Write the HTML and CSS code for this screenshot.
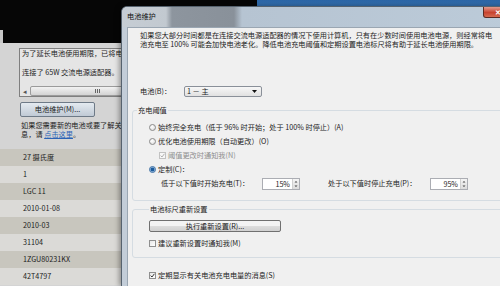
FILE: index.html
```html
<!DOCTYPE html>
<html lang="zh-CN">
<head>
    <meta charset="UTF-8">
    <meta name="viewport" content="width=device-width, initial-scale=1.0">
    <title>电池维护</title>
    <link rel="stylesheet" href="styles.css">
</head>
<body>
    <div class="desktop">
        <div class="topbar">
            <span class="tab"></span>
            <span class="glass"></span>
        </div>

        <div class="panel">
            <div class="notice">
                <p>为了延长电池使用期限，已将电池充电阈值设为</p>
                <p class="second">连接了 65W 交流电源适配器。</p>
                <div class="hscroll">
                    <span class="arrow">◂</span>
                    <span class="thumb"><span class="grip"></span></span>
                </div>
            </div>
            <button class="btn-main">电池维护(M)...</button>
            <p class="hint">如果您需要新的电池或要了解关于电池的更多信<br>息，请 <a href="#">点击这里</a>。</p>
        </div>

        <ul class="info">
            <li>27 摄氏度</li>
            <li>1</li>
            <li>LGC 11</li>
            <li>2010-01-08</li>
            <li>2010-03</li>
            <li>31104</li>
            <li>1ZGU80231KX</li>
            <li>42T4797</li>
        </ul>
    </div>

    <div class="dialog">
        <div class="titlebar">
            <span class="title">电池维护</span>
            <span class="close">✕</span>
        </div>

        <div class="client">
            <p class="intro">如果您大部分时间都是在连接交流电源适配器的情况下使用计算机，只有在少数时间使用电池电源，则经常将电<br>池充电至 100% 可能会加快电池老化。降低电池充电阈值和定期设置电池标尺将有助于延长电池使用期限。</p>

            <div class="battery-row">
                <span class="battery-label">电池(B)：</span>
                <span class="combo">
                    <span>1 － 主</span>
                    <svg width="5" height="3" viewBox="0 0 5 3"><path d="M0 0H5L2.5 3Z" fill="#111"/></svg>
                </span>
            </div>

            <fieldset class="group">
                <legend>充电阈值</legend>
                <div class="row">
                    <span class="radio"></span>
                    <span>始终完全充电（低于 96% 时开始；处于 100% 时停止）(A)</span>
                </div>
                <div class="row">
                    <span class="radio"></span>
                    <span>优化电池使用期限（自动更改）(O)</span>
                </div>
                <div class="row sub disabled">
                    <span class="check">
                        <svg width="5" height="5" viewBox="0 0 5 5"><path d="M0.6 2.6L2 4L4.4 0.8" fill="none" stroke="#a8a8a8" stroke-width="0.9"/></svg>
                    </span>
                    <span>阈值更改时通知我(N)</span>
                </div>
                <div class="row">
                    <span class="radio on"></span>
                    <span>定制(C)：</span>
                </div>
                <div class="row spin-row">
                    <span class="spin-label">低于以下值时开始充电(T)：</span>
                    <span class="spin">
                        <span class="val">15%</span>
                        <span class="arrows">
                            <svg width="6" height="10" viewBox="0 0 6 10"><path d="M1.5 3.5H4.5L3 2Z M1.5 6.5H4.5L3 8Z" fill="#444"/></svg>
                        </span>
                    </span>
                    <span class="spin-label second">处于以下值时停止充电(P)：</span>
                    <span class="spin">
                        <span class="val">95%</span>
                        <span class="arrows">
                            <svg width="6" height="10" viewBox="0 0 6 10"><path d="M1.5 3.5H4.5L3 2Z M1.5 6.5H4.5L3 8Z" fill="#444"/></svg>
                        </span>
                    </span>
                </div>
            </fieldset>

            <fieldset class="group gauge">
                <legend>电池标尺重新设置</legend>
                <button class="btn-reset">执行重新设置(R)...</button>
                <div class="row">
                    <span class="check"></span>
                    <span>建议重新设置时通知我(M)</span>
                </div>
            </fieldset>

            <div class="row last">
                <span class="check">
                    <svg width="5" height="5" viewBox="0 0 5 5"><path d="M0.6 2.6L2 4L4.4 0.8" fill="none" stroke="#222" stroke-width="0.9"/></svg>
                </span>
                <span>定期显示有关电池充电电量的消息(S)</span>
            </div>
        </div>
    </div>
</body>
</html>
```

FILE: styles.css
```css
* {
    box-sizing: border-box;
}

html, body {
    margin: 0;
    padding: 0;
}

body {
    position: relative;
    width: 500px;
    height: 286px;
    overflow: hidden;
    font-family: "Noto Sans CJK SC", "Noto Sans", sans-serif;
    font-size: 7.2px;
    line-height: 9px;
    color: #1c1c1c;
    background-color: #d4d4d4;
}

p {
    margin: 0;
}

/* 背景窗口 */
.desktop {
    width: 500px;
}

.topbar {
    display: flex;
    justify-content: space-between;
    height: 43px;
    background-color: #060606;
}
.topbar .tab {
    align-self: flex-end;
    width: 3px;
    height: 13px;
    background-color: #c6c6c6;
}
.topbar .glass {
    width: 243px;
    height: 16px;
    background: linear-gradient(#2c66a6, #3d7cbc);
}

.panel {
    height: 106px;
    padding: 5px 0 0 19px;
}

.notice {
    display: flex;
    flex-direction: column;
    width: 400px;
    height: 49px;
    padding-left: 2px;
    border: 1px solid #7f7f7f;
    background-color: #e5e5e5;
    white-space: nowrap;
}
.notice .second {
    margin-top: 9.5px;
}

.hscroll {
    display: flex;
    height: 10px;
    margin: auto 0 0 -2px;
}
.hscroll .arrow {
    width: 10px;
    text-align: center;
    line-height: 10px;
    color: #555;
}
.hscroll .thumb {
    flex: 1;
    display: flex;
    align-items: center;
    padding-left: 64px;
    border: 1px solid #9b9b9b;
    border-radius: 2px;
    background: linear-gradient(#f2f2f2, #d3d3d3);
}
.hscroll .grip {
    width: 5px;
    height: 4px;
    background: repeating-linear-gradient(90deg, #666 0 1px, transparent 1px 2px);
}

.btn-main {
    display: block;
    width: 75px;
    height: 15px;
    margin: 5px 0 0 1px;
    padding: 0;
    font: inherit;
    color: #1a1a1a;
    border: 1px solid #6e7a87;
    border-radius: 2px;
    background: linear-gradient(#e4eaf0, #c0cad5);
}

.hint {
    margin-top: 3.5px;
    padding-left: 2px;
    white-space: nowrap;
}
.hint a {
    color: #2b63b6;
}

.info {
    list-style: none;
    margin: 0;
    padding: 0;
}
.info li {
    height: 17px;
    padding-left: 23px;
    line-height: 17px;
    background-color: #dbdad7;
}
.info li:nth-child(odd) {
    background-color: #c8c6be;
}

/* 电池维护对话框 */
.dialog {
    position: absolute;
    left: 121px;
    top: 6px;
    width: 398px;
    height: 280px;
    border: 1px solid #56626e;
    border-bottom: none;
    border-radius: 6px 6px 0 0;
    background-color: #c3cdd8;
    box-shadow: -2px 0 5px rgba(0, 0, 0, 0.35);
}

.titlebar {
    display: flex;
    justify-content: space-between;
    align-items: flex-start;
    height: 20px;
    padding-left: 5px;
    border-radius: 5px 5px 0 0;
    background: linear-gradient(90deg, #c6cdd4 0, #c2c9d0 44px, #8d959e 50px, #89919a 112px, #b6c4d2 120px, #bccbd9 100%);
}
.titlebar .title {
    line-height: 18px;
    color: #111;
}
.titlebar .close {
    width: 30px;
    height: 11px;
    margin-right: 5px;
    line-height: 11px;
    text-align: center;
    font-size: 7px;
    font-weight: bold;
    color: #fff;
    border: 1px solid #5b2a22;
    border-top: none;
    border-radius: 0 0 3px 3px;
    background: linear-gradient(#e39a8c, #c8432f 55%, #d56a4f);
}

.client {
    height: 259px;
    margin: 0 5px;
    border: 1px solid #9aa6b2;
    border-bottom: none;
    background-color: #f0f0f0;
    white-space: nowrap;
}

.intro {
    padding: 3px 0 0 12px;
}

.battery-row {
    display: flex;
    align-items: center;
    height: 12px;
    margin-top: 36px;
    padding-left: 12px;
}
.battery-label {
    width: 44px;
}
.combo {
    display: flex;
    align-items: center;
    justify-content: space-between;
    width: 78px;
    height: 11px;
    padding: 0 4px 0 2px;
    border: 1px solid #8a9099;
    border-radius: 2px;
    background: linear-gradient(#f7f7f7, #e1e1e1);
}

.group {
    margin: 8px 6px 0 4px;
    padding: 5px 0 9px 4px;
    border: 1px solid #d5dce2;
    border-radius: 3px;
}
.group legend {
    padding: 0 1px;
    line-height: 10px;
}
.group.gauge {
    margin-top: 3px;
    padding: 6px 0 7px 16px;
}

.row {
    display: flex;
    align-items: center;
    height: 14px;
    padding-left: 12px;
}
.row.sub {
    padding-left: 22px;
}
.row.disabled {
    color: #8e8e8e;
}
.gauge .row {
    height: 13px;
    margin-top: 5px;
    padding-left: 0;
}
.row.last {
    margin-top: 10px;
    padding-left: 21px;
}

.radio {
    flex: none;
    width: 7px;
    height: 7px;
    margin-right: 2px;
    border: 1px solid #8a8a8a;
    border-radius: 50%;
    background: radial-gradient(circle at 40% 35%, #ffffff, #d6d6d6);
}
.radio.on {
    border-color: #3c6ea3;
    background: radial-gradient(circle, #1c5b9c 0 1.5px, #8fb6dc 2.2px, #e8f0f8 3.5px);
}

.check {
    flex: none;
    display: flex;
    align-items: center;
    justify-content: center;
    width: 7px;
    height: 7px;
    margin-right: 2px;
    border: 1px solid #8f8f8f;
    background: linear-gradient(135deg, #e6e6e6, #ffffff);
}
.disabled .check {
    border-color: #c2c2c2;
    background: #f7f7f7;
}

.spin-row {
    height: 15px;
    padding-left: 24px;
}
.spin-label {
    width: 101px;
}
.spin-label.second {
    width: 102px;
    margin-left: 28px;
}
.spin {
    display: flex;
    width: 38px;
    height: 12px;
    border: 1px solid #abadb3;
    background-color: #fff;
}
.spin .val {
    flex: 1;
    padding-right: 2px;
    line-height: 10px;
    text-align: right;
}
.spin .arrows {
    display: flex;
    width: 7px;
    border-left: 1px solid #d0d0d0;
    background: linear-gradient(#f4f4f4, #dcdcdc);
}

.btn-reset {
    display: block;
    width: 132px;
    height: 12px;
    padding: 0;
    font: inherit;
    line-height: 10px;
    color: #1a1a1a;
    border: 1px solid #707070;
    border-radius: 2px;
    background: linear-gradient(#f3f3f3 45%, #dcdcdc 55%, #d0d0d0);
}
```
